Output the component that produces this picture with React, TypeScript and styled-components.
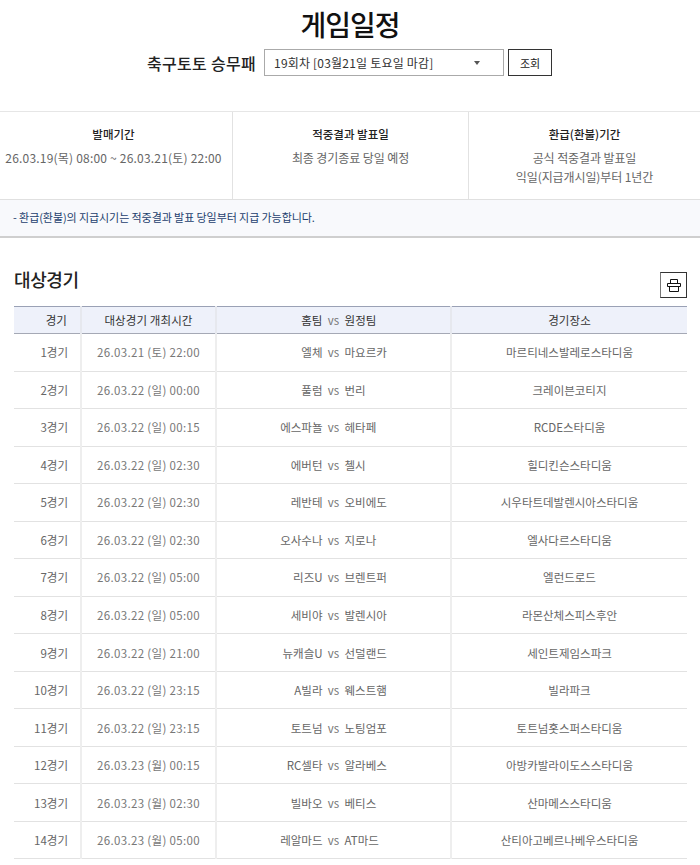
import * as React from 'react';
import styled, {createGlobalStyle} from 'styled-components';

interface Match {
    round: number;
    time: string;
    home: string;
    away: string;
    stadium: string;
}

const matches: Match[] = [
    {round: 1, time: '26.03.21 (토) 22:00', home: '엘체', away: '마요르카', stadium: '마르티네스발레로스타디움'},
    {round: 2, time: '26.03.22 (일) 00:00', home: '풀럼', away: '번리', stadium: '크레이븐코티지'},
    {round: 3, time: '26.03.22 (일) 00:15', home: '에스파뇰', away: '헤타페', stadium: 'RCDE스타디움'},
    {round: 4, time: '26.03.22 (일) 02:30', home: '에버턴', away: '첼시', stadium: '힐디킨슨스타디움'},
    {round: 5, time: '26.03.22 (일) 02:30', home: '레반테', away: '오비에도', stadium: '시우타트데발렌시아스타디움'},
    {round: 6, time: '26.03.22 (일) 02:30', home: '오사수나', away: '지로나', stadium: '엘사다르스타디움'},
    {round: 7, time: '26.03.22 (일) 05:00', home: '리즈U', away: '브렌트퍼', stadium: '엘런드로드'},
    {round: 8, time: '26.03.22 (일) 05:00', home: '세비야', away: '발렌시아', stadium: '라몬산체스피스후안'},
    {round: 9, time: '26.03.22 (일) 21:00', home: '뉴캐슬U', away: '선덜랜드', stadium: '세인트제임스파크'},
    {round: 10, time: '26.03.22 (일) 23:15', home: 'A빌라', away: '웨스트햄', stadium: '빌라파크'},
    {round: 11, time: '26.03.22 (일) 23:15', home: '토트넘', away: '노팅엄포', stadium: '토트넘홋스퍼스타디움'},
    {round: 12, time: '26.03.23 (월) 00:15', home: 'RC셀타', away: '알라베스', stadium: '아방카발라이도스스타디움'},
    {round: 13, time: '26.03.23 (월) 02:30', home: '빌바오', away: '베티스', stadium: '산마메스스타디움'},
    {round: 14, time: '26.03.23 (월) 05:00', home: '레알마드', away: 'AT마드', stadium: '산티아고베르나베우스타디움'},
];

const GlobalStyle = createGlobalStyle`
    html, body {
        margin: 0;
        padding: 0;
        background: #fff;
        font-family: "Noto Sans CJK KR", "Noto Sans", sans-serif;
        color: #333;
    }
    * {
        box-sizing: border-box;
    }
`;

const Page = styled.div`
    width: 700px;
    height: 865px;
    overflow: hidden;
`;

const Title = styled.h1`
    margin: 0;
    padding-top: 6px;
    height: 46px;
    font-size: 28px;
    line-height: 36px;
    font-weight: 500;
    letter-spacing: -1px;
    text-align: center;
    color: #111;
`;

const SearchBar = styled.div`
    display: flex;
    align-items: center;
    justify-content: center;
    gap: 8px;
    margin-top: 3px;
    height: 27px;
    padding-right: 1px;
`;

const GameName = styled.strong`
    font-size: 16px;
    font-weight: 500;
    letter-spacing: 0.3px;
    color: #222;
`;

const RoundSelect = styled.div`
    display: flex;
    align-items: center;
    justify-content: space-between;
    width: 240px;
    height: 27px;
    padding: 0 23px 0 9px;
    border: 1px solid #aaa;
    font-size: 12px;
    letter-spacing: 0.2px;
    color: #333;
`;

const Caret = styled.span`
    width: 0;
    height: 0;
    border-left: 3.5px solid transparent;
    border-right: 3.5px solid transparent;
    border-top: 4px solid #555;
`;

const SearchButton = styled.button`
    width: 44px;
    height: 27px;
    margin-left: -4px;
    padding: 0;
    border: 1px solid #333;
    background: #fff;
    font: inherit;
    font-size: 11px;
    color: #222;
`;

const InfoPanel = styled.div`
    display: grid;
    grid-template-columns: 233px 236px 231px;
    height: 89px;
    margin-top: 35px;
    border-top: 1px solid #e6e6e6;
    border-bottom: 1px solid #e0e0e0;
`;

const InfoCell = styled.div`
    padding-top: 13px;
    text-align: center;
    white-space: nowrap;
    &:first-child {
        padding-right: 5px;
    }
    &:not(:last-child) {
        border-right: 1px solid #e2e2e2;
    }
`;

const InfoTitle = styled.div`
    font-size: 11.5px;
    line-height: 18px;
    font-weight: 500;
    color: #222;
`;

const InfoText = styled.div<{ $wide?: boolean }>`
    margin-top: 5px;
    font-size: 12px;
    line-height: 19px;
    letter-spacing: ${({$wide}) => ($wide ? '0.2px' : '-0.1px')};
    color: #666;
`;

const Notice = styled.p`
    margin: 0;
    height: 38px;
    padding: 0 0 0 13px;
    background: #f8f9fc;
    border-bottom: 2px solid #cfcfcf;
    font-size: 11px;
    line-height: 35px;
    letter-spacing: -0.08px;
    color: #1d3f6e;
`;

const SectionHead = styled.div`
    display: flex;
    align-items: flex-end;
    justify-content: space-between;
    height: 68px;
    padding: 0 13px 8px 14px;
`;

const SectionTitle = styled.h2`
    margin: 0 0 7px;
    font-size: 18px;
    line-height: 24px;
    font-weight: 500;
    letter-spacing: -0.4px;
    color: #222;
`;

const PrintButton = styled.button`
    display: flex;
    align-items: center;
    justify-content: center;
    width: 27px;
    height: 26px;
    padding: 0;
    border: 1px solid #333;
    border-left-color: #777;
    background: #fff;
`;

const ScheduleTable = styled.table`
    width: 673px;
    margin-left: 14px;
    border-collapse: collapse;
    table-layout: fixed;
    font-size: 11.5px;
`;

const HeadRow = styled.tr`
    height: 27px;
    background: #eef1fa;
    border-top: 1px solid #9aa1b5;
    border-bottom: 1px solid #a5a9b5;
`;

const HeadCell = styled.th`
    padding: 0;
    font-weight: 400;
    letter-spacing: 0.1px;
    color: #333;
    text-align: center;
    border-left: 2px solid #e6e8ee;
    &:first-child {
        border-left: 0;
    }
`;

const RoundHead = styled(HeadCell)`
    text-align: right;
    padding-right: 13px;
`;

const Row = styled.tr`
    height: 37.54px;
    border-bottom: 1px solid #e2e2e2;
`;

const Cell = styled.td`
    padding: 0;
    color: #666;
    text-align: center;
    white-space: nowrap;
    border-left: 2px solid #eeeeee;
    &:first-child {
        border-left: 0;
    }
`;

const RoundCell = styled(Cell)`
    text-align: right;
    padding-right: 12px;
`;

const TimeCell = styled(Cell)`
    letter-spacing: 0.33px;
    color: #777;
`;

const Versus = styled.div`
    display: grid;
    grid-template-columns: 1fr 22px 1fr;
    align-items: center;
`;

const HomeTeam = styled.span`
    text-align: right;
`;

const AwayTeam = styled.span`
    text-align: left;
`;

const VsMark = styled.span`
    font-size: 11.5px;
    color: #777;
    text-align: center;
`;

function PrintIcon() {
    return (
        <svg width="14" height="13" viewBox="0 0 14 13" fill="none" stroke="#111" strokeWidth="1">
            <path d="M3.5 4.5V0.5h7v4"/>
            <path d="M0.5 4.5h13v3h-13z"/>
            <path d="M2.5 7.5v5h9v-5"/>
        </svg>
    );
}

export default function App() {
    return (
        <Page>
            <GlobalStyle/>
            <Title>게임일정</Title>
            <SearchBar>
                <GameName>축구토토 승무패</GameName>
                <RoundSelect>
                    <span>19회차 [03월21일 토요일 마감]</span>
                    <Caret/>
                </RoundSelect>
                <SearchButton>조회</SearchButton>
            </SearchBar>
            <InfoPanel>
                <InfoCell>
                    <InfoTitle>발매기간</InfoTitle>
                    <InfoText $wide>26.03.19(목) 08:00 ~ 26.03.21(토) 22:00</InfoText>
                </InfoCell>
                <InfoCell>
                    <InfoTitle>적중결과 발표일</InfoTitle>
                    <InfoText>최종 경기종료 당일 예정</InfoText>
                </InfoCell>
                <InfoCell>
                    <InfoTitle>환급(환불)기간</InfoTitle>
                    <InfoText>공식 적중결과 발표일<br/>익일(지급개시일)부터 1년간</InfoText>
                </InfoCell>
            </InfoPanel>
            <Notice>- 환급(환불)의 지급시기는 적중결과 발표 당일부터 지급 가능합니다.</Notice>
            <SectionHead>
                <SectionTitle>대상경기</SectionTitle>
                <PrintButton aria-label="인쇄"><PrintIcon/></PrintButton>
            </SectionHead>
            <ScheduleTable>
                <colgroup>
                    <col style={{width: 67}}/>
                    <col style={{width: 135}}/>
                    <col style={{width: 235}}/>
                    <col style={{width: 236}}/>
                </colgroup>
                <thead>
                    <HeadRow>
                        <RoundHead>경기</RoundHead>
                        <HeadCell>대상경기 개최시간</HeadCell>
                        <HeadCell>
                            <Versus>
                                <HomeTeam>홈팀</HomeTeam>
                                <VsMark>vs</VsMark>
                                <AwayTeam>원정팀</AwayTeam>
                            </Versus>
                        </HeadCell>
                        <HeadCell>경기장소</HeadCell>
                    </HeadRow>
                </thead>
                <tbody>
                    {matches.map((match) => (
                        <Row key={match.round}>
                            <RoundCell>{match.round}경기</RoundCell>
                            <TimeCell>{match.time}</TimeCell>
                            <Cell>
                                <Versus>
                                    <HomeTeam>{match.home}</HomeTeam>
                                    <VsMark>vs</VsMark>
                                    <AwayTeam>{match.away}</AwayTeam>
                                </Versus>
                            </Cell>
                            <Cell>{match.stadium}</Cell>
                        </Row>
                    ))}
                </tbody>
            </ScheduleTable>
        </Page>
    );
}
